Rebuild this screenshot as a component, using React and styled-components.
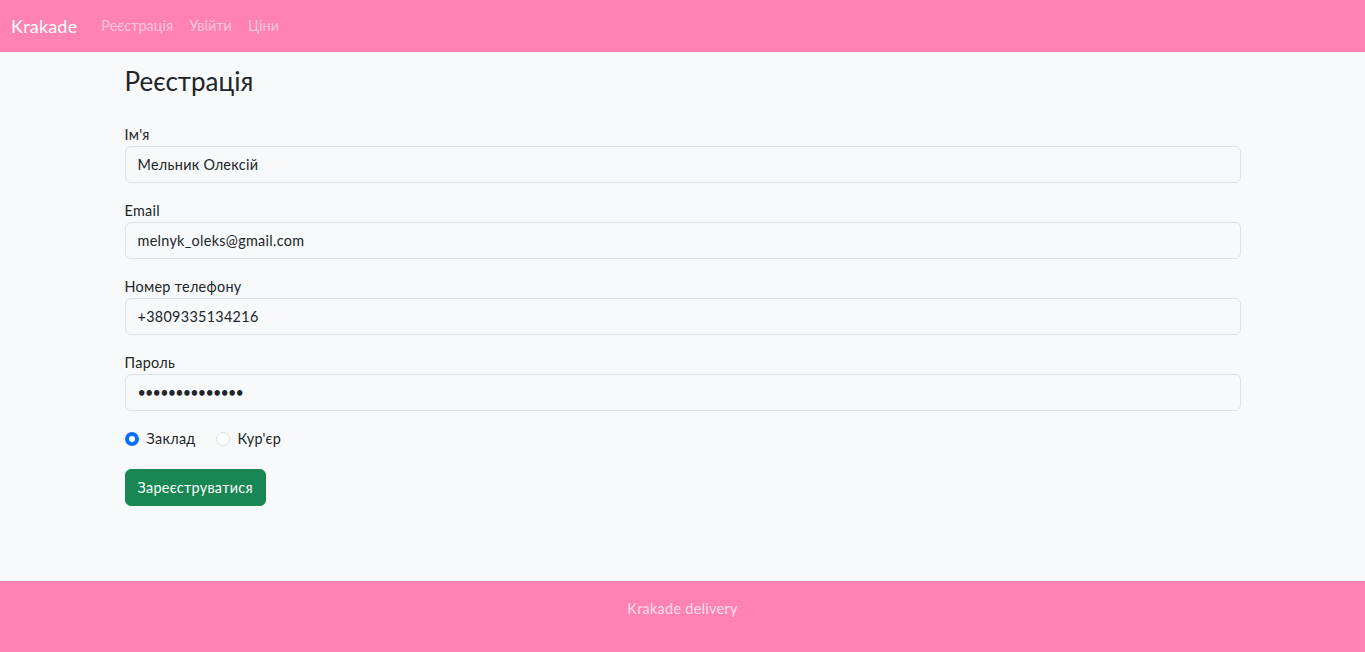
import React, {useState} from 'react';
import styled, {createGlobalStyle} from 'styled-components';

const GlobalStyle = createGlobalStyle`
  * { box-sizing: border-box; }
  body {
    margin: 0;
    font-family: "Lato", "Noto Sans", sans-serif;
    font-size: 14.4px;
    line-height: 1.6;
    letter-spacing: 0.3px;
    color: #212529;
    background: #f8f9fa;
  }
`;

const Page = styled.div`
  display: flex;
  flex-direction: column;
  min-height: 100vh;
`;

const Navbar = styled.nav`
  height: 52px;
  background: #ff82b2;
  display: flex;
  align-items: center;
  padding: 0 11px;
`;

const Brand = styled.a`
  color: #fff;
  font-size: 18px;
  letter-spacing: 0.2px;
  margin-right: 16px;
  text-decoration: none;
`;

const NavLink = styled.a`
  color: rgba(255, 255, 255, 0.55);
  font-size: 14.4px;
  letter-spacing: 0.05px;
  padding: 0 8px;
  text-decoration: none;
`;

const Main = styled.main`
  flex: 1;
  width: 1140px;
  margin: 0 auto;
  padding: 14px 12px 0;
`;

const Title = styled.h3`
  font-size: 26px;
  font-weight: 400;
  line-height: 1.2;
  letter-spacing: 0;
  margin: 0 0 26px;
`;

const Field = styled.div`
  margin-bottom: 16px;
`;

const Label = styled.label`
  display: block;
`;

const Input = styled.input`
  display: block;
  width: 100%;
  height: 37px;
  padding: 6px 12px;
  font: inherit;
  letter-spacing: ${p => (p.type === 'password' ? '-0.8px' : '0.3px')};
  color: #212529;
  background: #f8f9fa;
  border: 1px solid #dee2e6;
  border-radius: 6px;
  outline: none;
`;

const Choices = styled.div`
  display: flex;
  align-items: center;
  margin: 4px 0 19px;
  height: 23px;
`;

const Choice = styled.label`
  display: flex;
  align-items: center;
  gap: 8px;
  margin-right: 20px;
  cursor: pointer;
`;

const Radio = styled.span`
  width: 14px;
  height: 14px;
  border-radius: 50%;
  border: ${p => (p.checked ? '4px solid #0d6efd' : '1px solid #dee2e6')};
  background: #fff;
  flex: none;
`;

const Submit = styled.button`
  font: inherit;
  letter-spacing: 0.3px;
  color: #fff;
  background: #198754;
  border: 1px solid #198754;
  border-radius: 6px;
  height: 37px;
  padding: 0 12px;
  cursor: pointer;
`;

const Footer = styled.footer`
  height: 71px;
  background: #ff82b2;
  color: rgba(255, 255, 255, 0.75);
  text-align: center;
  padding-top: 16px;
`;

const fields = [
  {label: "Ім'я", value: 'Мельник Олексій', type: 'text'},
  {label: 'Email', value: 'melnyk_oleks@gmail.com', type: 'email'},
  {label: 'Номер телефону', value: '+3809335134216', type: 'text'},
  {label: 'Пароль', value: '12345678901234', type: 'password'}
];

export default function App() {
  const [role, setRole] = useState('place');

  return (
    <Page>
      <GlobalStyle />
      <Navbar>
        <Brand href="#">Krakade</Brand>
        <NavLink href="#">Реєстрація</NavLink>
        <NavLink href="#">Увійти</NavLink>
        <NavLink href="#">Ціни</NavLink>
      </Navbar>
      <Main>
        <Title>Реєстрація</Title>
        {fields.map(f => (
          <Field key={f.label}>
            <Label>{f.label}</Label>
            <Input type={f.type} defaultValue={f.value} />
          </Field>
        ))}
        <Choices>
          <Choice onClick={() => setRole('place')}>
            <Radio checked={role === 'place'} />
            Заклад
          </Choice>
          <Choice onClick={() => setRole('courier')}>
            <Radio checked={role === 'courier'} />
            Кур'єр
          </Choice>
        </Choices>
        <Submit>Зареєструватися</Submit>
      </Main>
      <Footer>Krakade delivery</Footer>
    </Page>
  );
}
